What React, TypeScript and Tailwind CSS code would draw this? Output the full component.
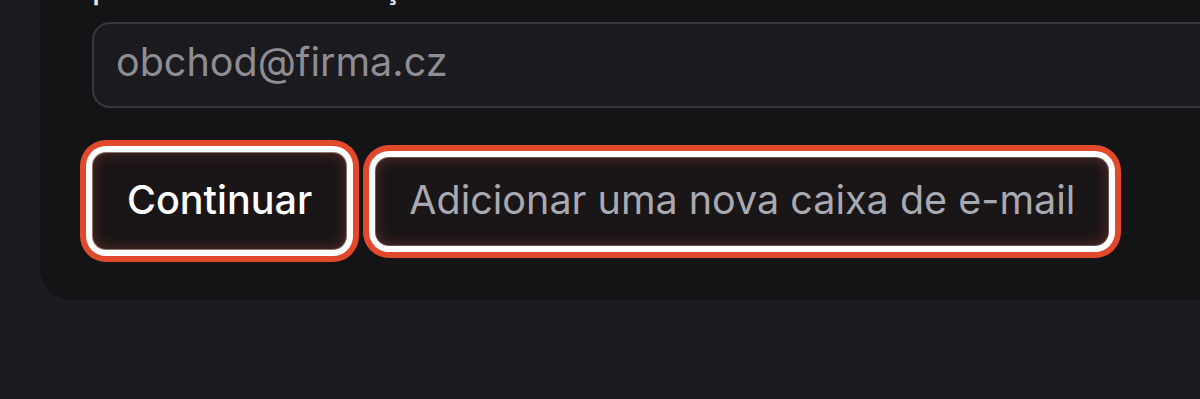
export default function App() {
  return (
    <div className="h-[399px] w-[1200px] overflow-hidden bg-[#1c1b20] font-['Inter',sans-serif]">
      <div className="-mt-[60px] ml-[40px] w-[1300px] rounded-[32px] bg-[#141316] pl-[52px] pt-[30px] pb-[50px]">
        <p className="mb-4 text-[32px] leading-[36px] font-medium text-[#e4e4e7]">para sua comunicação</p>
        <div className="flex h-[86px] items-center rounded-[18px] border-2 border-[#38373c] bg-[#1b1a1e] px-[22px]">
          <span className="-mt-1 text-[39.5px] text-[#8e8d94]">obchod@firma.cz</span>
        </div>
        <div className="mt-[44px] flex items-center gap-[28px]">
          <button className="h-[98px] rounded-[14px] border border-[#d8b4ab]/60 bg-[#1a1517] px-[34px] text-[39.5px] font-medium text-white shadow-[inset_0_0_14px_rgba(200,90,70,0.35),0_0_0_6px_#ffffff,0_0_0_12px_#e2492c]">
            Continuar
          </button>
          <button className="h-[89px] rounded-[14px] border border-[#d8b4ab]/40 bg-[#1a1517] px-[33px] text-[39.5px] text-[#a9a9b1] shadow-[inset_0_0_14px_rgba(200,90,70,0.35),0_0_0_6px_#ffffff,0_0_0_12px_#e2492c]">
            Adicionar uma nova caixa de e-mail
          </button>
        </div>
      </div>
    </div>
  );
}
